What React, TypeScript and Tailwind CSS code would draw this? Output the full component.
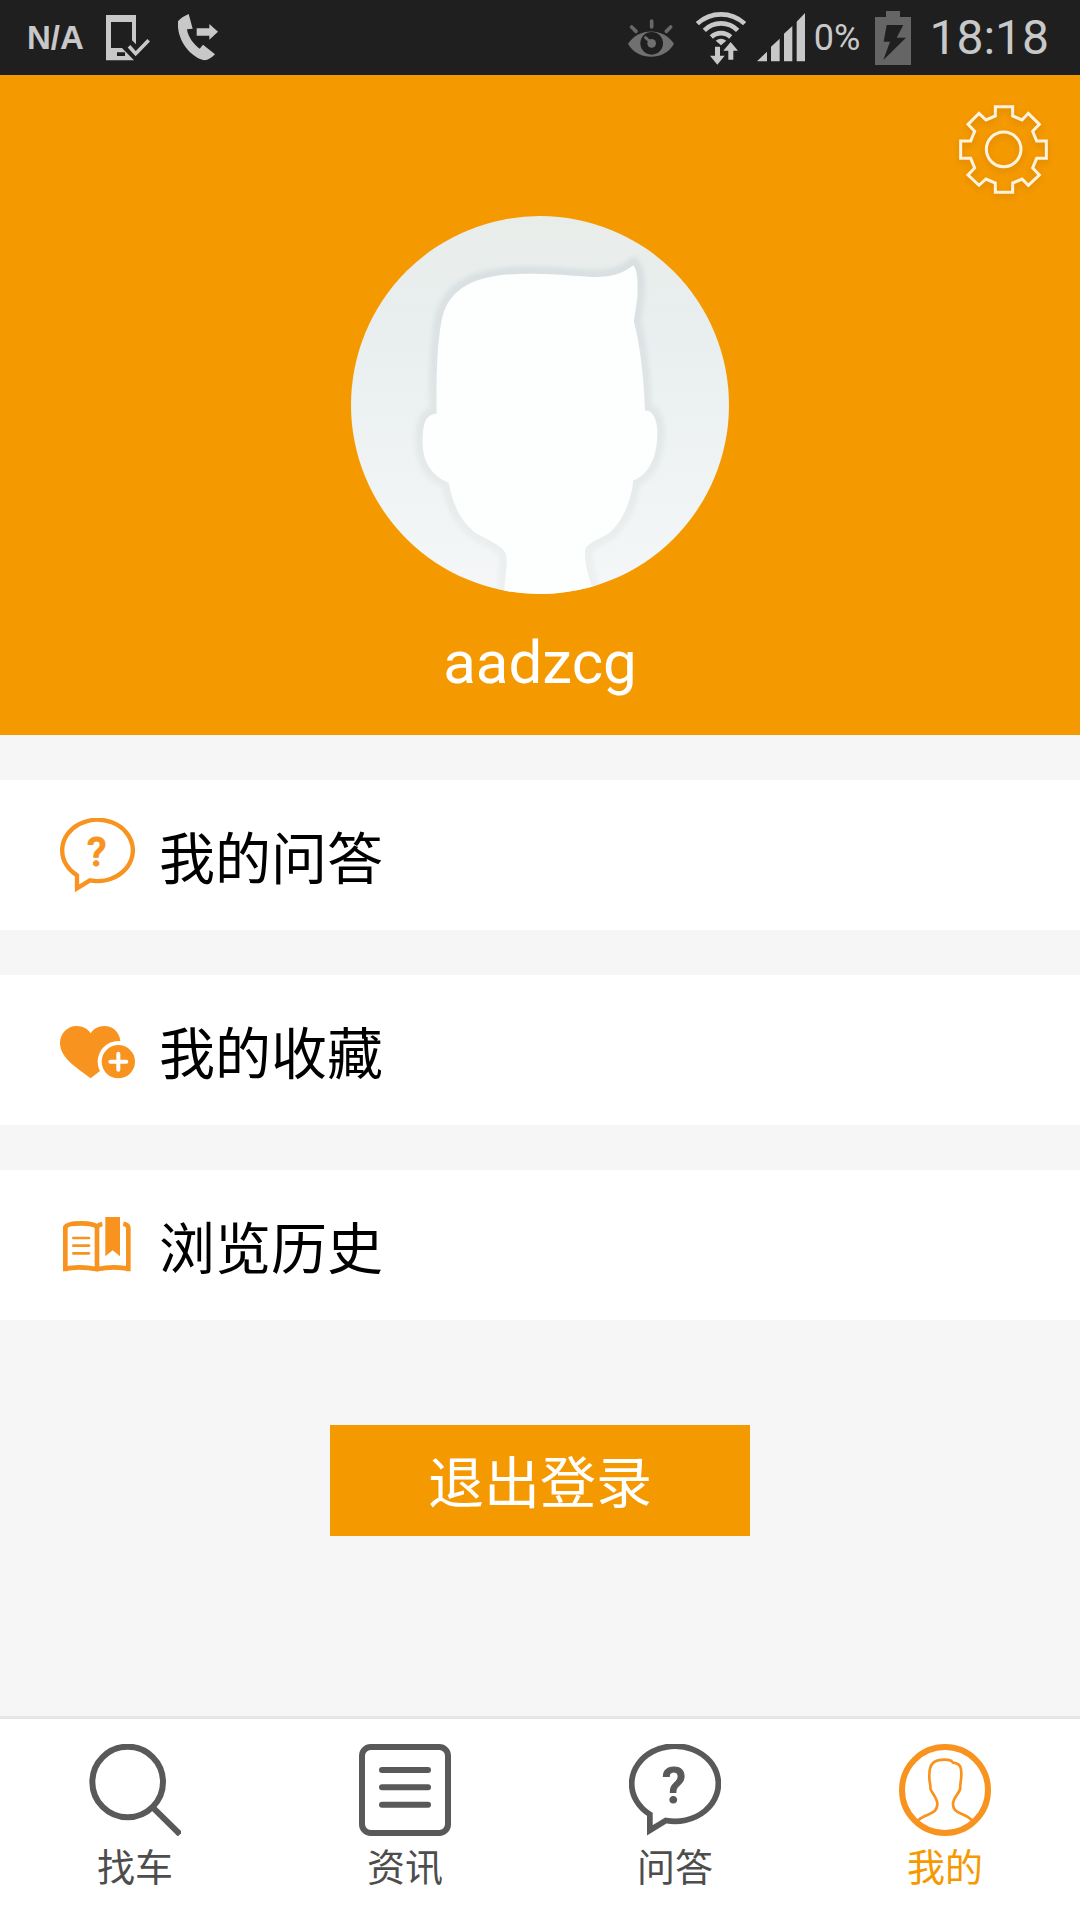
import { ReactNode } from "react";

function DeviceCheckIcon() {
  return (
    <svg className="w-11 h-[46px]" viewBox="0 0 132 138" fill="none">
      <path
        fill="#c8c8c8"
        fillRule="evenodd"
        d="M0 0H90V88L78 76V21H15V99H48L84 136H0ZM33 112V123H57V112Z"
      />
      <path stroke="#c8c8c8" strokeWidth="11" d="M69 94L89 116L128 76" />
    </svg>
  );
}

function CallForwardIcon() {
  return (
    <svg className="w-10 h-[47px]" viewBox="0 0 120 141" fill="#c8c8c8">
      <path d="M32 0L44 44L27 46C30 70 48 92 65 104L75 92L111 121C100 132 90 138 80 139C40 132 -5 80 0 22C8 12 20 5 32 0Z" />
      <path d="M56 43H94V30L120 53L94 77V65H56Z" />
    </svg>
  );
}

function EyeIcon() {
  return (
    <svg className="w-[46px] h-[38px]" viewBox="0 0 138 114" fill="none">
      <path
        stroke="#686868"
        strokeWidth="11"
        strokeLinecap="round"
        d="M71 6V24M11 24L24 37M128 24L115 37"
      />
      <path fill="#707070" d="M0 74C32 25 106 25 138 74C110 126 28 126 0 74Z" />
      <circle cx="71" cy="73" r="34" fill="#1f1f1f" />
      <circle cx="71" cy="73" r="13" fill="#707070" />
      <path stroke="#707070" strokeWidth="8" d="M71 73L50 53" />
    </svg>
  );
}

function WifiIcon() {
  return (
    <svg className="w-[50px] h-[54px]" viewBox="0 0 150 162" fill="none">
      <path
        stroke="#c8c8c8"
        strokeWidth="14"
        d="M4 38A104 104 0 0 1 146 38M25 58A70 70 0 0 1 125 58M46 78A42 42 0 0 1 104 78"
      />
      <path
        fill="#c8c8c8"
        d="M59 89Q75 77 91 89L75 103ZM57 107H72V134H86L64 161L42 134H57ZM104 93L126 119H112V146H97V119H82Z"
      />
    </svg>
  );
}

function SignalIcon() {
  return (
    <svg className="w-12 h-[49px]" viewBox="0 0 144 147" fill="#c8c8c8">
      <path d="M0 145L30 116V145ZM42 145V101L68 77V145ZM81 145V62L106 39V145ZM119 145V26L144 0V145Z" />
    </svg>
  );
}

function BatteryIcon() {
  return (
    <svg className="w-9 h-[54px]" viewBox="0 0 108 162">
      <path fill="#656565" d="M33 0H75V18H108V162H0V18H33Z" />
      <path fill="#1f1f1f" d="M35 42H85L65 80H93L25 147L45 92H26Z" />
    </svg>
  );
}

function GearIcon() {
  return (
    <svg
      className="w-[89px] h-[89px] drop-shadow-md"
      viewBox="0 0 267 267"
      fill="none"
      stroke="#fff3df"
      strokeWidth="9"
    >
      <path d="M109 5H161V33L189 45L208 25L241 58L221 79L233 108H262V160H233L221 189L241 210L208 241L189 222L161 234V262H109V234L81 222L60 241L27 210L47 189L35 160H5V108H35L47 79L27 58L60 25L81 45L109 33Z" />
      <circle cx="134" cy="133" r="52" />
    </svg>
  );
}

const headPath =
  "M457 1160C461 1100 467 1060 467 1033C467 1005 462 995 377 953C325 915 305 860 293 800C245 780 215 740 215 680C215 630 220 595 257 593C255 500 258 380 272 313C280 270 300 240 330 218C385 180 460 173 537 173C620 173 700 183 737 183C800 183 825 163 847 148C862 165 860 210 859 243C855 280 850 300 849 318C870 400 878 490 882 583C905 583 919 610 919 650C919 720 895 775 847 793C840 870 800 940 760 960C710 985 702 990 702 1010C702 1060 720 1100 737 1160Z";

function Avatar() {
  return (
    <svg
      className="w-[378px] h-[378px] rounded-full"
      viewBox="0 0 1134 1134"
      role="img"
      aria-label="头像"
    >
      <defs>
        <linearGradient id="backdrop" x1="0" y1="0" x2="0" y2="1">
          <stop offset="0" stopColor="#e9edea" />
          <stop offset="0.25" stopColor="#e8eeee" />
          <stop offset="1" stopColor="#f5f7f8" />
        </linearGradient>
        <linearGradient id="edge" x1="0" y1="0" x2="0" y2="1">
          <stop offset="0" stopColor="#d9e0e1" />
          <stop offset="0.5" stopColor="#e2e7e8" />
          <stop offset="1" stopColor="#eff2f2" />
        </linearGradient>
        <filter id="soft">
          <feGaussianBlur stdDeviation="6" />
        </filter>
      </defs>
      <rect width="1134" height="1134" fill="url(#backdrop)" />
      <path
        d={headPath}
        fill="none"
        stroke="url(#edge)"
        strokeWidth="44"
        filter="url(#soft)"
      />
      <path d={headPath} fill="#fdfefe" />
    </svg>
  );
}

function QuestionIcon({
  className,
  strokeWidth,
}: {
  className: string;
  strokeWidth: number;
}) {
  return (
    <svg className={className} viewBox="0 0 225 225" fill="none">
      <path
        stroke="currentColor"
        strokeWidth={strokeWidth}
        d="M51 172V211L90 187A106 92 0 1 0 51 172Z"
      />
      <text
        x="110"
        y="144"
        textAnchor="middle"
        fill="currentColor"
        stroke="currentColor"
        strokeWidth="3"
        className="font-[Roboto,sans-serif] text-[120px] font-medium"
      >
        ?
      </text>
    </svg>
  );
}

function HeartPlusIcon() {
  return (
    <svg className="w-[75px] h-[75px]" viewBox="0 0 225 225">
      <path
        fill="currentColor"
        d="M92 196C60 170 0 138 0 90C0 62 22 39 50 39C68 39 84 48 92 61C100 48 115 39 133 39C158 39 178 57 181 83C184 135 120 172 92 196Z"
      />
      <circle cx="175" cy="146" r="62" fill="#fff" />
      <circle cx="175" cy="146" r="50" fill="currentColor" />
      <path
        stroke="#fff"
        strokeWidth="12"
        strokeLinecap="round"
        d="M151 146H199M175 122V170"
      />
    </svg>
  );
}

function BookIcon() {
  return (
    <svg
      className="w-[75px] h-[75px]"
      viewBox="0 0 225 225"
      fill="none"
      stroke="currentColor"
    >
      <path
        strokeWidth="14"
        d="M16 190V58Q20 46 65 46Q100 46 111 56V184M111 56Q116 50 127 48M190 47Q205 50 205 60V190M12 183Q60 173 111 184Q160 173 210 183"
      />
      <path
        strokeWidth="8"
        strokeLinecap="round"
        d="M40 90H87M40 113H87M40 136H87"
      />
      <path
        fill="currentColor"
        stroke="none"
        d="M136 27H180V145L158 127L136 145Z"
      />
    </svg>
  );
}

function SearchIcon() {
  return (
    <svg
      className="w-[92px] h-[92px]"
      viewBox="0 0 276 276"
      fill="none"
      stroke="currentColor"
      strokeWidth="18"
    >
      <circle cx="116" cy="114" r="106" />
      <path d="M191 190L273 271" />
    </svg>
  );
}

function NewsIcon() {
  return (
    <svg
      className="w-[92px] h-[92px]"
      viewBox="0 0 276 276"
      fill="none"
      stroke="currentColor"
      strokeWidth="18"
    >
      <rect x="9" y="9" width="258" height="258" rx="26" />
      <path strokeLinecap="round" d="M69 78H207M69 130H207M69 182H207" />
    </svg>
  );
}

function PersonIcon() {
  return (
    <svg
      className="w-[92px] h-[92px]"
      viewBox="0 0 276 276"
      fill="none"
      stroke="currentColor"
    >
      <circle cx="138" cy="138" r="129" strokeWidth="18" />
      <path
        strokeWidth="8"
        d="M58 228C80 208 115 212 115 180C115 160 95 145 94 132C96 125 90 115 91 95C91 60 102 47 138 47C158 47 158 52 162 56C182 58 187 68 187 90C187 115 182 120 184 132C182 148 162 160 162 180C162 212 196 204 218 228"
      />
    </svg>
  );
}

function StatusBar() {
  return (
    <div className="flex h-[75px] items-center justify-between bg-[#1f1f1f] pl-[27px] pr-[31px] text-[#c8c8c8]">
      <div className="flex items-center">
        <span className="font-['Liberation_Sans',sans-serif] text-[33px] font-bold">
          N/A
        </span>
        <div className="ml-[22px] flex items-center gap-7">
          <DeviceCheckIcon />
          <CallForwardIcon />
        </div>
      </div>
      <div className="flex items-center">
        <EyeIcon />
        <div className="ml-[22px] flex items-center gap-[11px]">
          <WifiIcon />
          <SignalIcon />
        </div>
        <span className="ml-[9px] text-4xl">0%</span>
        <div className="ml-[15px]">
          <BatteryIcon />
        </div>
        <span className="ml-[18px] text-5xl">18:18</span>
      </div>
    </div>
  );
}

function MenuRow({ icon, label }: { icon: ReactNode; label: string }) {
  return (
    <li>
      <button className="flex h-[150px] w-full items-center gap-6 bg-white pl-[60px] text-left">
        <span className="text-[#f7931e]">{icon}</span>
        <span className="pt-[10px] text-[56px] leading-none text-black">
          {label}
        </span>
      </button>
    </li>
  );
}

const tabs = [
  { label: "找车", icon: <SearchIcon /> },
  { label: "资讯", icon: <NewsIcon /> },
  {
    label: "问答",
    icon: <QuestionIcon className="w-[92px] h-[92px]" strokeWidth={14} />,
  },
  { label: "我的", icon: <PersonIcon />, active: true },
];

export default function App() {
  return (
    <div className="flex min-h-screen flex-col bg-[#f6f6f6] font-[Roboto,'Noto_Sans_CJK_SC',sans-serif]">
      <StatusBar />

      {/* Profile */}
      <header className="flex flex-col bg-[#f59900] pb-8 pt-[30px]">
        <button className="mr-8 self-end" aria-label="设置">
          <GearIcon />
        </button>
        <div className="mt-[22px] flex flex-col items-center">
          <Avatar />
          <h1 className="mt-[29px] text-[60px] leading-[80px] text-white">
            aadzcg
          </h1>
        </div>
      </header>

      {/* Menu */}
      <main className="flex flex-1 flex-col">
        <ul className="mt-[45px] flex flex-col gap-[45px]">
          <MenuRow
            icon={
              <QuestionIcon className="w-[75px] h-[75px]" strokeWidth={13} />
            }
            label="我的问答"
          />
          <MenuRow icon={<HeartPlusIcon />} label="我的收藏" />
          <MenuRow icon={<BookIcon />} label="浏览历史" />
        </ul>
        <button className="mt-[105px] h-[111px] w-[420px] self-center bg-[#f59900] pt-[6px] text-[56px] leading-none text-white">
          退出登录
        </button>
      </main>

      {/* Tabs */}
      <nav className="grid grid-cols-4 border-t-[3px] border-[#e6e6e6] bg-white pb-[30px] pt-[25px]">
        {tabs.map((tab) => (
          <a
            key={tab.label}
            href="#"
            className={`flex flex-col items-center gap-[10px] ${
              tab.active ? "text-[#f7931e]" : "text-[#595959]"
            }`}
          >
            {tab.icon}
            <span
              className={`text-[38px] leading-[44px] ${
                tab.active ? "text-[#f59900]" : "text-[#4d4d4d]"
              }`}
            >
              {tab.label}
            </span>
          </a>
        ))}
      </nav>
    </div>
  );
}
